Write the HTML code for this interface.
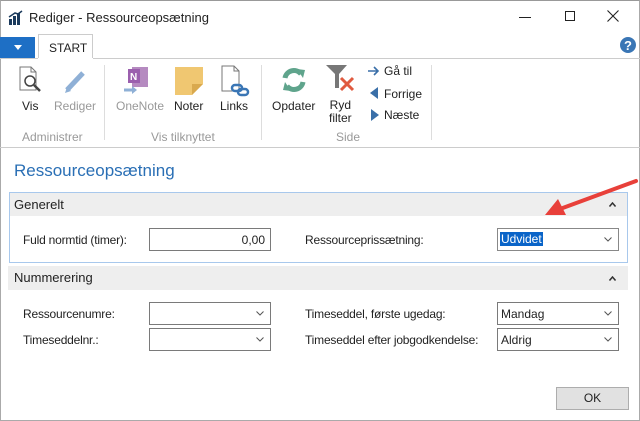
<!DOCTYPE html>
<html><head><meta charset="utf-8"><style>
*{margin:0;padding:0;box-sizing:border-box}
body{width:640px;height:421px;background:#fff;font-family:"Liberation Sans",sans-serif;font-size:12px;color:#222;position:relative;overflow:hidden}
.a{position:absolute;white-space:nowrap}
.box{position:absolute;border:1px solid #7a7a7a;background:#fff;height:23px}
.chev{position:absolute;right:6px;top:8px}
.lbl{position:absolute;font-size:12px;letter-spacing:-0.2px}
.rl{position:absolute;font-size:12px;color:#222;text-align:center}
.gray{color:#999}
</style></head><body>
<div class="a" style="left:0;top:0;width:640px;height:421px;border:1px solid #aaa;border-top-color:#999"></div>
<svg class="a" style="left:8px;top:10px" width="16" height="16"><rect x="1" y="9" width="3" height="6" fill="#1b3a5c"/><rect x="5" y="6" width="3" height="9" fill="#1b3a5c"/><rect x="9" y="3" width="3" height="12" fill="#1b3a5c"/><path d="M1 7 L7 3 L10 4 L14 1" stroke="#1b3a5c" stroke-width="1.5" fill="none"/></svg>
<div class="a" style="left:29px;top:10px;font-size:13px">Rediger - Ressourceopsætning</div>
<div class="a" style="left:519px;top:17px;width:12px;height:1px;background:#222"></div>
<div class="a" style="left:565px;top:11px;width:10px;height:10px;border:1px solid #222"></div>
<svg class="a" style="left:607px;top:10px" width="12" height="12"><path d="M0.5 0.5L11.5 11.5M11.5 0.5L0.5 11.5" stroke="#222" stroke-width="1.1"/></svg>
<div class="a" style="left:0;top:37px;width:35px;height:21px;background:#1e6fc5"></div>
<svg class="a" style="left:14px;top:45px" width="8" height="5"><path d="M0 0H8L4 5Z" fill="#fff"/></svg>
<div class="a" style="left:38px;top:34px;width:55px;height:25px;border:1px solid #ccc;border-bottom:none;background:#fff"></div>
<div class="a" style="left:49px;top:41px;font-size:12px">START</div>
<div class="a" style="left:0;top:58px;width:640px;height:1px;background:#ccc"></div>
<div class="a" style="left:38px;top:58px;width:55px;height:1px;background:#fff"></div>
<svg class="a" style="left:620px;top:37px" width="16" height="16"><circle cx="8" cy="8" r="8" fill="#3a76b5"/><text x="8" y="13" font-size="13" font-weight="bold" fill="#fff" text-anchor="middle" font-family="Liberation Sans">?</text></svg>
<div class="a" style="left:0;top:147px;width:640px;height:1px;background:#ccc"></div>
<svg class="a" style="left:19px;top:66px" width="28" height="30"><path d="M1 1H12L17 6V24H1Z" fill="#fff" stroke="#777"/><path d="M12 1V6H17" fill="none" stroke="#777"/><circle cx="11" cy="15" r="5" fill="#fff" stroke="#444" stroke-width="1.5"/><path d="M15 19L21 25" stroke="#444" stroke-width="2.5"/></svg>
<div class="rl" style="left:22px;top:99px">Vis</div>
<svg class="a" style="left:63px;top:68px" width="26" height="26"><path d="M4 22L20 5" stroke="#8fb0d6" stroke-width="5"/><path d="M2 25L4 19 8 23Z" fill="#8fb0d6"/></svg>
<div class="rl gray" style="left:54px;top:99px">Rediger</div>
<div class="a" style="left:104px;top:65px;width:1px;height:75px;background:#ddd"></div>
<svg class="a" style="left:123px;top:65px" width="30" height="30"><rect x="9" y="2" width="16" height="20" fill="#b58ac0"/><rect x="5" y="4" width="12" height="14" fill="#9b5fae"/><text x="7" y="15" font-size="10" font-weight="bold" fill="#fff" font-family="Liberation Sans">N</text><path d="M1 25H11" stroke="#8fb0d6" stroke-width="3"/><path d="M9 21L14 25 9 29Z" fill="#8fb0d6"/></svg>
<div class="rl gray" style="left:116px;top:99px">OneNote</div>
<svg class="a" style="left:174px;top:66px" width="30" height="30"><path d="M1 1H29V18L18 29H1Z" fill="#f0c771"/><path d="M18 29V18H29" fill="#d9a94e"/></svg>
<div class="rl" style="left:174px;top:99px">Noter</div>
<svg class="a" style="left:220px;top:65px" width="30" height="32"><path d="M2 1H14L19 6V26H2Z" fill="#fff" stroke="#777"/><path d="M14 1V6H19" fill="none" stroke="#777"/><rect x="12" y="20" width="10" height="6" rx="3" fill="none" stroke="#3a76b5" stroke-width="2.5"/><rect x="18" y="24" width="10" height="6" rx="3" fill="none" stroke="#3a76b5" stroke-width="2.5"/></svg>
<div class="rl" style="left:220px;top:99px">Links</div>
<div class="a" style="left:261px;top:65px;width:1px;height:75px;background:#ddd"></div>
<svg class="a" style="left:280px;top:66px" width="28" height="28"><path d="M5 12A9 9 0 0 1 21 8" stroke="#5fa48c" stroke-width="5" fill="none"/><path d="M17 3L25 4 23 12Z" fill="#5fa48c"/><path d="M23 16A9 9 0 0 1 7 20" stroke="#5fa48c" stroke-width="5" fill="none"/><path d="M11 25L3 24 5 16Z" fill="#5fa48c"/></svg>
<div class="rl" style="left:272px;top:99px">Opdater</div>
<svg class="a" style="left:325px;top:64px" width="32" height="32"><path d="M1 1H22L14 10V24H10V10Z" fill="#777"/><path d="M16 14L28 26M28 14L16 26" stroke="#e05a3f" stroke-width="3"/></svg>
<div class="rl" style="left:329px;top:99px;line-height:13px">Ryd<br>filter</div>
<svg class="a" style="left:368px;top:66px" width="12" height="10"><path d="M0 5H9M6 1L10 5 6 9" stroke="#3a6fa8" stroke-width="1.6" fill="none"/></svg>
<div class="a" style="left:384px;top:64px">Gå til</div>
<svg class="a" style="left:370px;top:87px" width="10" height="12"><path d="M8 0V12L0 6Z" fill="#3a6fa8"/></svg>
<div class="a" style="left:384px;top:87px">Forrige</div>
<svg class="a" style="left:370px;top:109px" width="10" height="12"><path d="M1 0V12L9 6Z" fill="#3a6fa8"/></svg>
<div class="a" style="left:384px;top:108px">Næste</div>
<div class="a" style="left:431px;top:65px;width:1px;height:75px;background:#ddd"></div>
<div class="a gray" style="left:22px;top:130px;font-size:12px">Administrer</div>
<div class="a gray" style="left:151px;top:130px;font-size:12px">Vis tilknyttet</div>
<div class="a gray" style="left:336px;top:130px;font-size:12px">Side</div>
<div class="a" style="left:14px;top:161px;font-size:17px;color:#2a6fb5">Ressourceopsætning</div>
<div class="a" style="left:9px;top:192px;width:619px;height:71px;border:1px solid #a8c8ec"></div>
<div class="a" style="left:10px;top:193px;width:617px;height:23px;background:#eee"></div>
<div class="a" style="left:14px;top:197px;font-size:13px">Generelt</div>
<svg class="a" style="left:609px;top:202px" width="7" height="5"><path d="M0.5 4.5L3.5 1 6.5 4.5" stroke="#333" stroke-width="1.5" fill="none"/></svg>
<div class="lbl" style="left:23px;top:233px">Fuld normtid (timer):</div>
<div class="box" style="left:149px;top:228px;width:122px"><span class="a" style="right:5px;top:4px">0,00</span></div>
<div class="lbl" style="left:305px;top:233px">Ressourceprissætning:</div>
<div class="box" style="left:497px;top:228px;width:122px;border-color:#888"><span class="a" style="left:2px;top:3px;background:#0a64c8;color:#fff;padding:0 1px">Udvidet</span><svg class="chev" width="8" height="5"><path d="M0.5 0.5L4 4 7.5 0.5" stroke="#555" fill="none"/></svg></div>
<div class="a" style="left:8px;top:266px;width:620px;height:24px;background:#eee"></div>
<div class="a" style="left:14px;top:270px;font-size:13px">Nummerering</div>
<svg class="a" style="left:609px;top:276px" width="7" height="5"><path d="M0.5 4.5L3.5 1 6.5 4.5" stroke="#333" stroke-width="1.5" fill="none"/></svg>
<div class="lbl" style="left:23px;top:307px">Ressourcenumre:</div>
<div class="box" style="left:149px;top:302px;width:122px"><svg class="chev" width="8" height="5"><path d="M0.5 0.5L4 4 7.5 0.5" stroke="#555" fill="none"/></svg></div>
<div class="lbl" style="left:23px;top:333px">Timeseddelnr.:</div>
<div class="box" style="left:149px;top:328px;width:122px"><svg class="chev" width="8" height="5"><path d="M0.5 0.5L4 4 7.5 0.5" stroke="#555" fill="none"/></svg></div>
<div class="lbl" style="left:305px;top:307px">Timeseddel, første ugedag:</div>
<div class="box" style="left:497px;top:302px;width:122px"><span class="a" style="left:3px;top:4px">Mandag</span><svg class="chev" width="8" height="5"><path d="M0.5 0.5L4 4 7.5 0.5" stroke="#555" fill="none"/></svg></div>
<div class="lbl" style="left:305px;top:333px">Timeseddel efter jobgodkendelse:</div>
<div class="box" style="left:497px;top:328px;width:122px"><span class="a" style="left:3px;top:4px">Aldrig</span><svg class="chev" width="8" height="5"><path d="M0.5 0.5L4 4 7.5 0.5" stroke="#555" fill="none"/></svg></div>
<div class="a" style="left:556px;top:387px;width:73px;height:23px;border:1px solid #adadad;background:#e1e1e1;text-align:center;line-height:21px">OK</div>
<svg class="a" style="left:530px;top:170px" width="110" height="55"><path d="M106 11L30 39" stroke="#e8403a" stroke-width="4" stroke-linecap="round"/><path d="M15 45L28 29 36 45Z" fill="#e8403a"/></svg>
</body></html>
